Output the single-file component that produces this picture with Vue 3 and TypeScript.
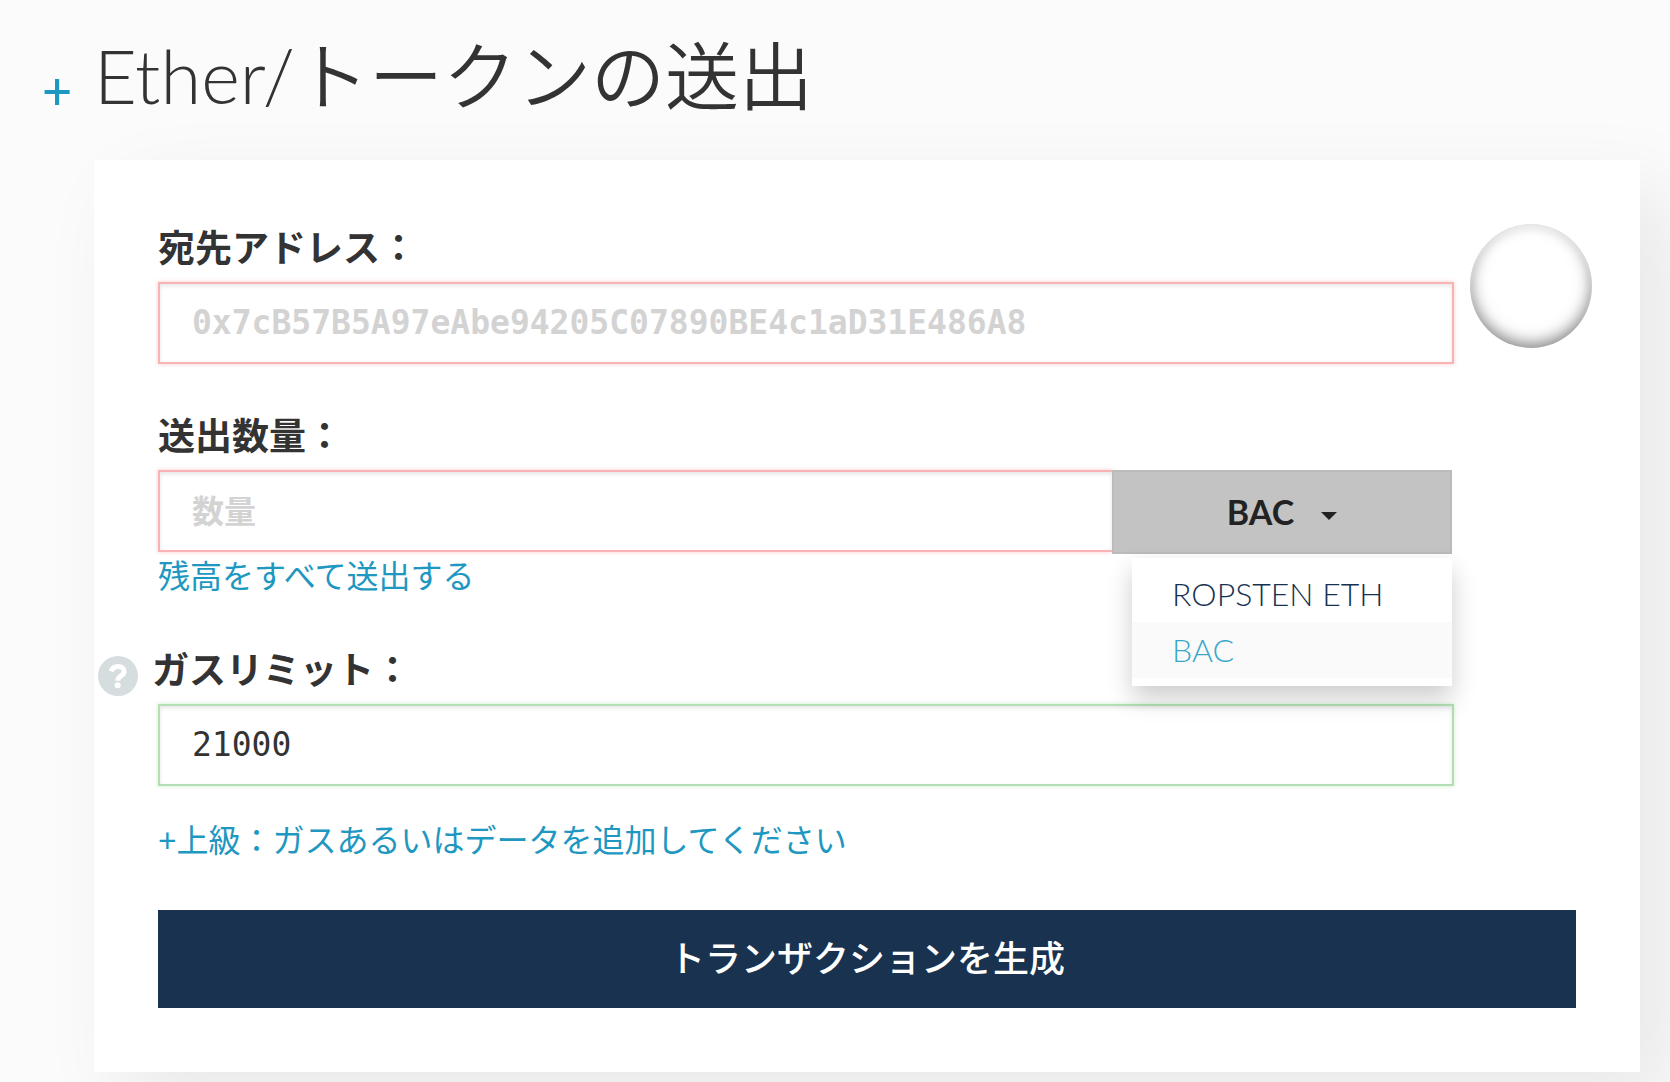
<script setup lang="ts">
import { ref } from 'vue'

interface Token {
  id: string
  name: string
}

const tokens: Token[] = [
  { id: 'eth', name: 'ROPSTEN ETH' },
  { id: 'bac', name: 'BAC' },
]

const expanded = ref(true)
const menuOpen = ref(true)
const selected = ref<Token>(tokens[1])
const address = ref('')
const amount = ref('')
const gasLimit = ref('21000')

function choose(token: Token): void {
  selected.value = token
  menuOpen.value = false
}
</script>

<template>
  <main class="page">
    <header class="heading">
      <button class="toggle" type="button" :aria-expanded="expanded" @click="expanded = !expanded">+</button>
      <h1>Ether/<span class="cjk">トークンの送出</span></h1>
    </header>

    <form v-show="expanded" class="card" @submit.prevent>
      <div class="columns">
        <div class="fields">
          <div class="field">
            <label class="label" for="address">宛先アドレス：</label>
            <input
              id="address"
              v-model="address"
              class="input invalid mono"
              type="text"
              placeholder="0x7cB57B5A97eAbe94205C07890BE4c1aD31E486A8"
            />
          </div>

          <div class="field">
            <label class="label" for="amount">送出数量：</label>
            <div class="group">
              <input id="amount" v-model="amount" class="input invalid" type="text" placeholder="数量" />
              <div class="dropdown">
                <button class="selector" type="button" :aria-expanded="menuOpen" @click="menuOpen = !menuOpen">
                  {{ selected.name }}
                  <svg class="caret" viewBox="0 0 16 8" aria-hidden="true"><path d="M0 0h16L8 8z" /></svg>
                </button>
                <ul v-show="menuOpen" class="menu">
                  <li v-for="token in tokens" :key="token.id">
                    <a href="#" :class="{ active: token.id === selected.id }" @click.prevent="choose(token)">{{ token.name }}</a>
                  </li>
                </ul>
              </div>
            </div>
            <a class="link" href="#">残高をすべて送出する</a>
          </div>

          <div class="field">
            <div class="with-help">
              <svg class="help" viewBox="0 0 40 40" aria-hidden="true">
                <circle cx="20" cy="20" r="20" fill="#d6dddf" />
                <path
                  d="M13.200 15.300c1.200-3.200 3.600-4.800 7-4.800 3.600 0 5.900 1.900 5.900 4.900 0 4.600-6.300 4.300-6.300 9.300"
                  fill="none"
                  stroke="#fff"
                  stroke-width="5"
                />
                <circle cx="19.700" cy="29.300" r="3" fill="#fff" />
              </svg>
              <label class="label" for="gas">ガスリミット：</label>
            </div>
            <input id="gas" v-model="gasLimit" class="input valid mono" type="text" />
          </div>
        </div>
        <div class="identicon" role="img" aria-label="identicon"></div>
      </div>

      <a class="link advanced" href="#">+上級：ガスあるいはデータを追加してください</a>
      <button class="submit" type="submit">トランザクションを生成</button>
    </form>
  </main>
</template>

<style>
body {
  margin: 0;
  background: #fbfbfb;
}
</style>

<style scoped>
.page {
  box-sizing: border-box;
  overflow: hidden;
  padding: 0 30px 10px 94px;
  font-family: Lato, "Noto Sans CJK JP", sans-serif;
  font-size: 32px;
  color: #333;
}

.page * {
  box-sizing: border-box;
}

.heading {
  display: flex;
  align-items: flex-start;
  height: 160px;
  padding-top: 24px;
  margin-left: -52px;
}

.toggle {
  width: 52px;
  margin-top: 40px;
  padding: 0;
  border: 0;
  background: none;
  color: #1e97c1;
  font: 500 52px/1 Lato, sans-serif;
  text-align: left;
  cursor: pointer;
}

h1 {
  margin: 0;
  font-size: 74px;
  font-weight: 300;
  line-height: 104px;
  white-space: nowrap;
}

.cjk {
  font-weight: 350;
}

.card {
  padding: 64px;
  background: #fff;
  box-shadow: 32px 32px 80px rgba(0, 0, 0, 0.08);
}

.columns {
  display: flex;
  gap: 16px;
  margin-right: -16px;
}

.fields {
  display: flex;
  flex: 1;
  flex-direction: column;
  gap: 48px;
  min-width: 0;
}

.label {
  display: block;
  margin-bottom: 10px;
  font-size: 37px;
  font-weight: 700;
  line-height: 48px;
}

.input {
  display: block;
  width: 100%;
  height: 82px;
  padding: 0 32px 2px;
  border: 2px solid #ccc;
  border-radius: 0;
  outline: 0;
  background: #fff;
  color: #333;
  font: 700 32px/40px Lato, "Noto Sans CJK JP", sans-serif;
}

.input.mono {
  font: 400 33px/40px "DejaVu Sans Mono", monospace;
}

.input::placeholder {
  color: #d3d3d3;
  font-weight: 700;
  opacity: 1;
}

.input.invalid {
  border-color: #f8b4b4;
  box-shadow: inset 0 2px 4px rgba(0, 0, 0, 0.1), 0 0 4px rgba(248, 150, 150, 0.5);
}

.input.valid {
  border-color: #b4dfb4;
  box-shadow: inset 0 2px 4px rgba(0, 0, 0, 0.1), 0 0 4px rgba(150, 220, 150, 0.5);
}

.group {
  display: flex;
  align-items: flex-start;
  margin-right: 2px;
}

.group .input {
  flex: 1;
  min-width: 0;
  border-right: 0;
}

.dropdown {
  position: relative;
  width: 340px;
}

.selector {
  display: flex;
  align-items: center;
  justify-content: center;
  gap: 27px;
  width: 100%;
  height: 84px;
  padding: 0;
  border: 2px solid #bbb;
  background: #c3c3c3;
  color: #222;
  font: 700 34px/40px Lato, sans-serif;
  cursor: pointer;
}

.caret {
  width: 16px;
  height: 8px;
  margin-top: 8px;
  fill: #222;
}

.menu {
  position: absolute;
  z-index: 2;
  top: 88px;
  right: 0;
  left: 20px;
  margin: 0;
  padding: 8px 0;
  background: #fff;
  box-shadow: 0 12px 24px rgba(0, 0, 0, 0.2);
  list-style: none;
}

.menu a {
  display: block;
  padding: 0 40px;
  color: #163151;
  font-weight: 300;
  line-height: 56px;
  text-decoration: none;
}

.menu a.active {
  background: #fafafa;
  color: #3aa7ca;
}

.link {
  display: block;
  color: #1e97c1;
  line-height: 44px;
  text-decoration: none;
}

.with-help {
  display: flex;
  gap: 14px;
  margin-left: -60px;
}

.help {
  width: 40px;
  height: 40px;
  margin-top: 10px;
}

.identicon {
  width: 122px;
  height: 124px;
  border-radius: 50%;
  box-shadow: inset 0 4px 4px rgba(255, 255, 255, 0.4), inset 0 -4px 16px rgba(0, 0, 0, 0.5);
}

.advanced {
  margin: 32px 0 48px;
}

.submit {
  display: block;
  width: 100%;
  height: 98px;
  padding: 0 0 2px;
  border: 0;
  background: #19324f;
  color: #fff;
  font: 500 36px/48px Lato, "Noto Sans CJK JP", sans-serif;
  cursor: pointer;
}
</style>
